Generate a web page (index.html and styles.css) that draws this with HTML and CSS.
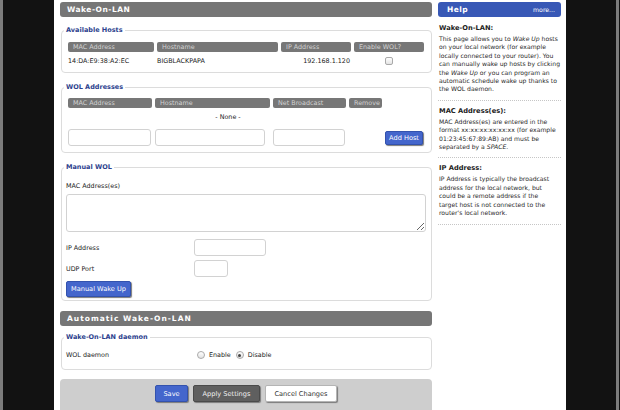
FILE: index.html
```html
<!DOCTYPE html>
<html lang="en">
  <head>
    <meta charset="UTF-8" />
    <title>Wake-On-LAN</title>
    <link rel="stylesheet" href="styles.css">
  </head>
  <body>
    <div class="frame">
      <div class="page">
        <div class="main">
          <h2 class="bar">Wake-On-LAN</h2>

          <fieldset class="box hosts--box">
            <legend>Available Hosts</legend>
            <div class="grid hosts">
              <span class="th">MAC Address</span>
              <span class="th">Hostname</span>
              <span class="th">IP Address</span>
              <span class="th">Enable WOL?</span>
              <span>14:DA:E9:38:A2:EC</span>
              <span>BIGBLACKPAPA</span>
              <span class="right">192.168.1.120</span>
              <span class="center"><input type="checkbox" class="check" /></span>
            </div>
          </fieldset>

          <fieldset class="box wol--box">
            <legend>WOL Addresses</legend>
            <div class="grid wol">
              <span class="th">MAC Address</span>
              <span class="th">Hostname</span>
              <span class="th">Net Broadcast</span>
              <span class="th">Remove</span>
              <span></span>
              <span class="none">- None -</span>
              <span></span>
              <span class="cell-in"><input type="text" class="field w83" /></span>
              <span class="cell-in"><input type="text" class="field w110" /></span>
              <span class="cell-in"><input type="text" class="field w72" /></span>
              <span class="cell-in"></span>
              <span class="cell-in"><button class="btn blue add">Add Host</button></span>
            </div>
          </fieldset>

          <fieldset class="box manual--box">
            <legend>Manual WOL</legend>
            <div class="label-line">MAC Address(es)</div>
            <textarea class="macs"></textarea>
            <div class="row ip-row">
              <label>IP Address</label>
              <input type="text" class="field w72" />
            </div>
            <div class="row udp-row">
              <label>UDP Port</label>
              <input type="text" class="field w34" />
            </div>
            <button class="btn blue wake">Manual Wake Up</button>
          </fieldset>

          <h2 class="bar bar--second">Automatic Wake-On-LAN</h2>

          <fieldset class="box daemon--box">
            <legend>Wake-On-LAN daemon</legend>
            <div class="row">
              <label class="wide">WOL daemon</label>
              <input type="radio" name="wol" class="radio" id="wol-on" />
              <span class="radio-text">Enable</span>
              <input type="radio" name="wol" class="radio" id="wol-off" checked />
              <span class="radio-text">Disable</span>
            </div>
          </fieldset>

          <div class="submit--footer">
            <button class="btn blue save">Save</button>
            <button class="btn dark apply">Apply Settings</button>
            <button class="btn light cancel">Cancel Changes</button>
          </div>
        </div>

        <div class="help">
          <div class="help--head">
            <span class="help-title">Help</span>
            <span class="more">more...</span>
          </div>
          <div class="help-sec first">
            <h4>Wake-On-LAN:</h4>
            <p>This page allows you to <i>Wake Up</i> hosts<br>on your local network (for example<br>locally connected to your router). You<br>can manually wake up hosts by clicking<br>the <i>Wake Up</i> or you can program an<br>automatic schedule wake up thanks to<br>the WOL daemon.</p>
          </div>
          <div class="help-sec">
            <h4>MAC Address(es):</h4>
            <p>MAC Address(es) are entered in the<br>format xx:xx:xx:xx:xx:xx (for example<br>01:23:45:67:89:AB) and must be<br>separated by a <i>SPACE</i>.</p>
          </div>
          <div class="help-sec">
            <h4>IP Address:</h4>
            <p>IP Address is typically the broadcast<br>address for the local network, but<br>could be a remote address if the<br>target host is not connected to the<br>router's local network.</p>
          </div>
        </div>
      </div>
    </div>
  </body>
</html>
```

FILE: styles.css
```css
* {
  box-sizing: border-box;
  margin: 0;
  padding: 0;
}
body {
  background-color: #121212;
  font-family: "DejaVu Sans", Verdana, sans-serif;
  font-size: 6.4px;
  color: #222;
}
.frame {
  width: 619px;
  height: 410px;
  border-left: 3px solid #7c7c7c;
  border-right: 3px solid #7c7c7c;
  overflow: hidden;
}
.page {
  width: 512px;
  height: 410px;
  margin-left: 51px;
  background-color: #fff;
  display: flex;
  gap: 6px;
  padding: 0 5px 0 6px;
}
.main {
  width: 372px;
  flex-shrink: 0;
}
.help {
  width: 123px;
  flex-shrink: 0;
}

/* section headers */
.bar {
  margin-top: 2px;
  height: 15px;
  line-height: 15px;
  padding-left: 7px;
  background-color: #767676;
  border-radius: 3px;
  color: #fff;
  font-size: 7.5px;
  font-weight: bold;
  letter-spacing: 0.5px;
}
.bar--second {
  margin-top: 10px;
  letter-spacing: 1px;
}

/* fieldsets */
.box {
  border: 1px solid #dcdcdc;
  border-radius: 4px;
  margin: 9px 0 0 1px;
  padding: 7px 6px 6px 6px;
  min-width: 0;
}
.box legend {
  color: #2d3f8e;
  font-weight: bold;
  font-size: 6.5px;
  line-height: 9px;
  padding: 0 2px;
  margin-left: -4px;
}
.wol--box {
  margin-top: 10px;
  padding-top: 6px;
}
.manual--box {
  margin-top: 10px;
  padding: 10px 5px 3px 4px;
}
.manual--box legend {
  margin-left: -2px;
}
.daemon--box {
  margin-top: 7px;
  padding: 9px 5px 10px 4px;
}
.daemon--box legend {
  margin-left: -2px;
}

/* tables */
.grid {
  display: grid;
  column-gap: 3px;
  row-gap: 4px;
  line-height: 10px;
}
.hosts {
  grid-template-columns: 86px 121px 70px 70px;
}
.wol {
  grid-template-columns: 84px 115px 73px 33px 40px;
}
.th {
  height: 10px;
  background-color: #777;
  color: #d2d2d2;
  border-radius: 2px;
  padding-left: 5px;
  white-space: nowrap;
  overflow: hidden;
}
.right {
  text-align: right;
  padding-right: 1px;
}
.center {
  display: flex;
  justify-content: center;
  align-items: center;
}
.none {
  grid-column: 1 / 5;
  text-align: center;
  padding-left: 6px;
}
.cell-in {
  margin-top: 3px;
  display: flex;
  align-items: center;
}

/* form controls */
.field {
  height: 17px;
  border: 1px solid #d2d2d2;
  border-radius: 3px;
  background-color: #fff;
}
.w83 {
  width: 83px;
}
.w110 {
  width: 110px;
}
.w72 {
  width: 72px;
}
.w34 {
  width: 34px;
}
.check {
  appearance: none;
  width: 8px;
  height: 8px;
  border: 1px solid #a9a9a9;
  border-radius: 2px;
  background: linear-gradient(#fff, #e4e4e4);
}
.radio {
  appearance: none;
  width: 8px;
  height: 8px;
  border: 1px solid #aaa;
  border-radius: 50%;
  background: linear-gradient(#fff, #e2e2e2);
  margin-right: 4px;
  position: relative;
}
.radio:checked::after {
  content: "";
  position: absolute;
  left: 1.5px;
  top: 1.5px;
  width: 3px;
  height: 3px;
  border-radius: 50%;
  background-color: #444;
}
.radio-text {
  margin-right: 5px;
}
.label-line {
  line-height: 8px;
}
.macs {
  display: block;
  width: 360px;
  height: 38px;
  margin-top: 4px;
  border: 1px solid #d2d2d2;
  border-radius: 3px;
}
.row {
  display: flex;
  align-items: center;
}
.row label {
  width: 128px;
}
.row label.wide {
  width: 131px;
}
.ip-row {
  margin-top: 7px;
}
.udp-row {
  margin-top: 4px;
}

/* buttons */
.btn {
  font-family: "DejaVu Sans", Verdana, sans-serif;
  font-size: 6.6px;
  height: 16px;
  border-radius: 2px;
  box-shadow: 1px 1px 1px #7a7a7a;
  cursor: pointer;
}
.blue {
  background-color: #4466cc;
  border: 1px solid #3352ad;
  color: #fff;
}
.dark {
  background-color: #5f5f5f;
  border: 1px solid #4a4a4a;
  color: #f2f2f2;
}
.light {
  background-color: #fff;
  border: 1px solid #b4b4b4;
  color: #333;
}
.add {
  width: 38px;
  height: 14px;
}
.wake {
  margin-top: 4px;
  width: 65px;
}
.submit--footer {
  margin-top: 9px;
  height: 40px;
  background-color: #cecece;
  border-radius: 4px 4px 0 0;
  display: flex;
  justify-content: center;
  align-items: flex-start;
  gap: 5px;
  padding-top: 6px;
}
.save {
  width: 33px;
  height: 17px;
}
.apply {
  width: 67px;
  height: 17px;
}
.cancel {
  width: 72px;
  height: 17px;
}

/* help panel */
.help--head {
  margin-top: 2px;
  height: 15px;
  background-color: #3858b6;
  border-radius: 3px;
  color: #fff;
  display: flex;
  justify-content: space-between;
  align-items: center;
  padding: 0 6px 0 9px;
}
.help-title {
  font-size: 7.5px;
  font-weight: bold;
  letter-spacing: 0.4px;
}
.more {
  font-size: 6.2px;
}
.help-sec {
  padding: 6px 0 6px 1px;
  border-bottom: 1px dotted #c6c6c6;
}
.help-sec.first {
  padding-top: 7px;
}
.help-sec h4 {
  font-size: 6.7px;
  line-height: 9px;
}
.help-sec p {
  margin-top: 2px;
  line-height: 8.4px;
  font-size: 6.1px;
  white-space: nowrap;
  color: #2a2a2a;
}
```
